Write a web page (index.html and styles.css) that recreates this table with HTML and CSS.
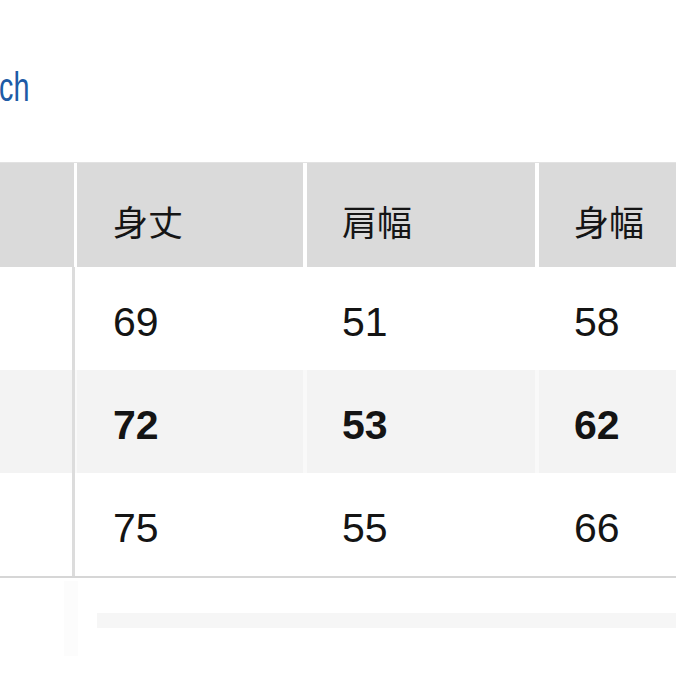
FILE: index.html
```html
<!DOCTYPE html>
<html lang="ja">
<head>
<meta charset="utf-8">
<link rel="stylesheet" href="styles.css">
</head>
<body>
<div class="page">
  <div class="link"><span class="link-text">ch</span></div>
  <div class="table">
    <div class="row head">
      <div class="cell first"></div>
      <div class="cell">身丈</div>
      <div class="cell">肩幅</div>
      <div class="cell">身幅</div>
    </div>
    <div class="row body">
      <div class="cell first"></div>
      <div class="cell">69</div>
      <div class="cell">51</div>
      <div class="cell">58</div>
    </div>
    <div class="row body shade bold">
      <div class="cell first"></div>
      <div class="cell">72</div>
      <div class="cell">53</div>
      <div class="cell">62</div>
    </div>
    <div class="row body">
      <div class="cell first"></div>
      <div class="cell">75</div>
      <div class="cell">55</div>
      <div class="cell">66</div>
    </div>
  </div>
  <div class="below">
    <div class="ghost"></div>
    <div class="bar"></div>
  </div>
</div>
</body>
</html>
```

FILE: styles.css
```css
html, body {
  margin: 0;
  padding: 0;
  background: #ffffff;
}

.page {
  width: 676px;
  height: 676px;
  overflow: hidden;
  font-family: "Liberation Sans", Arial, "Noto Sans CJK JP", sans-serif;
  color: #111;
}

.link {
  padding-top: 67px;
  height: 40px;
  font-size: 40px;
  line-height: 40px;
  color: #1d5ba6;
}

.link-text {
  display: inline-block;
  transform: scaleX(0.72);
  transform-origin: left center;
  margin-left: -1px;
}

.table {
  margin-top: 55px;
  border-top: 1px solid #e2e2e2;
  border-bottom: 2px solid #d6d6d6;
}

.row {
  display: grid;
  grid-template-columns: 74px 226px 229px 1fr;
  column-gap: 3px;
}

.row.head {
  height: 104px;
}

.row.head .cell {
  background: #dadada;
  font-family: "Noto Sans CJK JP", sans-serif;
  font-size: 35px;
  line-height: 35px;
  padding-top: 40px;
  padding-left: 35px;
  color: #151515;
}

.row.head .cell.first {
  padding: 0;
}

.row.body {
  height: 103px;
}

.row.body .cell {
  font-size: 41px;
  line-height: 41px;
  padding-top: 35px;
  padding-left: 35px;
  color: #141414;
}

.row.body .cell.first {
  padding: 0;
  border-right: 3px solid #dcdcdc;
  margin-right: -1px;
}

.row.shade {
  background: #f9f9f9;
}

.row.shade .cell {
  background: #f3f3f3;
}

.row.body.shade .cell.first {
  background: #f3f3f3;
}

.row.bold .cell {
  font-weight: bold;
}

.row .cell:nth-child(2) {
  padding-left: 36px;
}

.row > .cell:nth-child(3),
.row > .cell:nth-child(4) {
  margin-left: 1px;
}

.below {
  display: flex;
  height: 97px;
}

.ghost {
  width: 14px;
  height: 75px;
  margin-left: 64px;
  margin-top: 3px;
  background: #fcfcfc;
}

.bar {
  flex: 1;
  height: 15px;
  margin-left: 19px;
  margin-top: 35px;
  background: #f6f6f6;
}
```
